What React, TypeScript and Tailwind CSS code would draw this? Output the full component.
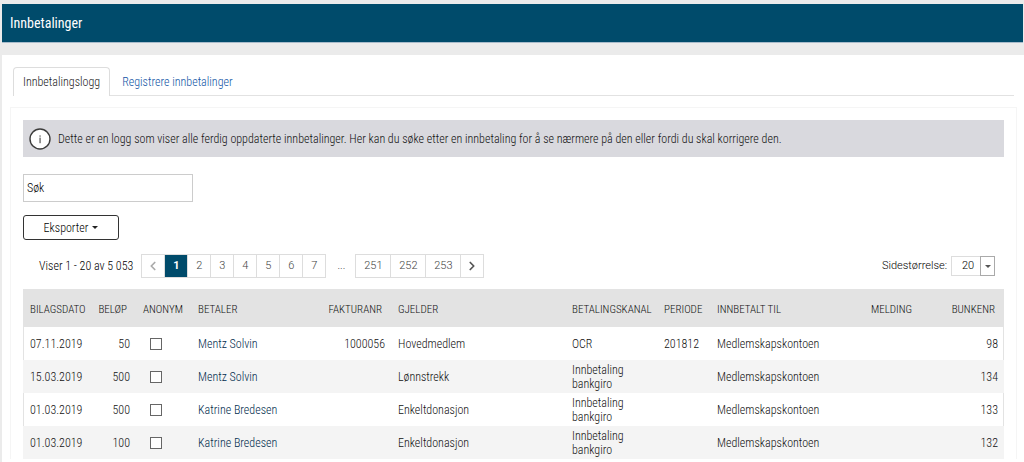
import { ChevronLeft, ChevronRight } from "lucide-react";

type Payment = {
  date: string;
  amount: string;
  payer: string;
  invoice: string;
  concerns: string;
  channel: string;
  period: string;
  account: string;
  batch: string;
};

const payments: Payment[] = [
  { date: "07.11.2019", amount: "50", payer: "Mentz Solvin", invoice: "1000056", concerns: "Hovedmedlem", channel: "OCR", period: "201812", account: "Medlemskapskontoen", batch: "98" },
  { date: "15.03.2019", amount: "500", payer: "Mentz Solvin", invoice: "", concerns: "Lønnstrekk", channel: "Innbetaling bankgiro", period: "", account: "Medlemskapskontoen", batch: "134" },
  { date: "01.03.2019", amount: "500", payer: "Katrine Bredesen", invoice: "", concerns: "Enkeltdonasjon", channel: "Innbetaling bankgiro", period: "", account: "Medlemskapskontoen", batch: "133" },
  { date: "01.03.2019", amount: "100", payer: "Katrine Bredesen", invoice: "", concerns: "Enkeltdonasjon", channel: "Innbetaling bankgiro", period: "", account: "Medlemskapskontoen", batch: "132" },
];

const columns = [
  { title: "Bilagsdato", width: "w-[70px]", align: "pl-[7px] text-left" },
  { title: "Beløp", width: "w-[43px]", align: "pr-[9px] text-right" },
  { title: "Anonym", width: "w-[55px]", align: "pl-[7px] text-left" },
  { title: "Betaler", width: "w-[131px]", align: "pl-[7px] text-left" },
  { title: "Fakturanr", width: "w-[69px]", align: "pr-[9px] text-right" },
  { title: "Gjelder", width: "", align: "pl-[7px] text-left" },
  { title: "Betalingskanal", width: "w-[92px]", align: "pl-[7px] text-left" },
  { title: "Periode", width: "w-[53px]", align: "pl-[7px] text-left" },
  { title: "Innbetalt til", width: "w-[154px]", align: "pl-[7px] text-left" },
  { title: "Melding", width: "w-[66px]", align: "pl-[7px] text-left" },
  { title: "Bunkenr", width: "w-[74px]", align: "pr-[9px] text-right" },
];

const firstPages = ["1", "2", "3", "4", "5", "6", "7"];
const lastPages = ["251", "252", "253"];

function Tabs() {
  return (
    <nav className="mr-2.5 ml-[11px] flex border-b border-[#e2e2e2]">
      <a
        href="#logg"
        className="-mb-px flex h-[29px] items-center rounded-t border border-b-0 border-[#dddddd] bg-white px-[9px] text-[#222222]"
      >
        Innbetalingslogg
      </a>
      <a href="#registrere" className="-mb-px flex h-[29px] items-center px-3 text-[#0f55a5]">
        Registrere innbetalinger
      </a>
    </nav>
  );
}

function InfoBox() {
  return (
    <div className="flex h-[37px] items-center gap-[7px] bg-[#d9d9de] px-1.5 text-[#111111]">
      <svg viewBox="0 0 22 22" className="size-[22px] shrink-0" aria-hidden="true">
        <circle cx="11" cy="11" r="10" fill="#ffffff" stroke="#3c3c3c" strokeWidth="1.4" />
        <rect x="10.5" y="7.4" width="1.1" height="1.3" fill="#444444" />
        <rect x="10.5" y="9.6" width="1.1" height="5.6" fill="#444444" />
      </svg>
      <p>
        Dette er en logg som viser alle ferdig oppdaterte innbetalinger. Her kan du søke etter en
        innbetaling for å se nærmere på den eller fordi du skal korrigere den.
      </p>
    </div>
  );
}

function Pager() {
  return (
    <div className="mt-3.5 flex items-center">
      <p className="ml-4 text-black">Viser 1 - 20 av 5 053</p>
      <div className="ml-2 flex font-[Roboto,sans-serif] text-[11px] text-[#444444]">
        <button aria-label="Forrige side" className="flex h-6 w-6 items-center justify-center border border-[#dddddd]">
          <ChevronLeft className="size-3.5 text-[#aaaaaa]" strokeWidth={3} />
        </button>
        {firstPages.map((page) => (
          <button
            key={page}
            className={
              page === "1"
                ? "-ml-px h-6 w-6 border border-[#dddddd] bg-[#004b6b] font-bold text-white"
                : "-ml-px h-6 w-6 border border-[#dddddd]"
            }
          >
            {page}
          </button>
        ))}
        <span className="flex w-[30px] items-center justify-center">...</span>
        {lastPages.map((page) => (
          <button key={page} className="-ml-px h-6 w-9 border border-[#dddddd]">
            {page}
          </button>
        ))}
        <button aria-label="Neste side" className="-ml-px flex h-6 w-6 items-center justify-center border border-[#dddddd]">
          <ChevronRight className="size-3.5 text-[#555555]" strokeWidth={3} />
        </button>
      </div>
      <div className="mr-[9px] ml-auto flex items-center gap-1 font-[Roboto,sans-serif] text-[11px] text-black">
        <label htmlFor="pageSize">Sidestørrelse:</label>
        <div className="relative">
          <select
            id="pageSize"
            defaultValue="20"
            className="block h-5 w-11 appearance-none border border-[#dddddd] bg-white pl-2.5 text-black"
          >
            <option>20</option>
            <option>50</option>
            <option>100</option>
          </select>
          <span className="pointer-events-none absolute inset-y-0 right-0 flex w-[15px] items-center justify-center border border-[#aaaaaa]">
            <svg viewBox="0 0 6 3" className="h-[3px] w-1.5" aria-hidden="true">
              <path d="M0 0h6L3 3z" fill="#555555" />
            </svg>
          </span>
        </div>
      </div>
    </div>
  );
}

function PaymentTable() {
  return (
    <table className="mt-[11px] w-full table-fixed text-[#111111] shadow-[inset_1px_0_#e3e3e3,inset_-1px_0_#e3e3e3]">
      <thead className="bg-[#e3e3e3]">
        <tr className="h-[38px]">
          {columns.map((column) => (
            <th
              key={column.title}
              className={`${column.width} ${column.align} pt-[3px] text-[11px] font-light whitespace-nowrap uppercase`}
            >
              {column.title}
            </th>
          ))}
        </tr>
      </thead>
      <tbody>
        {payments.map((payment) => (
          <tr key={payment.batch} className="h-[33px] even:bg-[#f4f4f4]">
            <td className="pl-[7px]">{payment.date}</td>
            <td className="pr-1.5 text-right">{payment.amount}</td>
            <td className="pl-3.5">
              <input
                type="checkbox"
                aria-label="Anonym"
                className="block size-3 appearance-none border border-[#666666] bg-white"
              />
            </td>
            <td className="pl-[7px]">
              <a href="#betaler" className="text-[#002b4d]">
                {payment.payer}
              </a>
            </td>
            <td className="pr-1.5 text-right">{payment.invoice}</td>
            <td className="pl-[7px]">{payment.concerns}</td>
            <td className="pr-5 pl-[7px] leading-[14px]">{payment.channel}</td>
            <td className="pl-[7px]">{payment.period}</td>
            <td className="pl-[7px]">{payment.account}</td>
            <td></td>
            <td className="pr-1.5 text-right">{payment.batch}</td>
          </tr>
        ))}
      </tbody>
    </table>
  );
}

export default function App() {
  return (
    <div className="flex min-h-screen flex-col bg-[#ebebeb] pt-1 pl-0.5 font-['Roboto_Condensed',Roboto,sans-serif] text-xs leading-4 font-light">
      <header className="mr-px flex h-[39px] items-center border-b border-[#a9bccb] bg-[#004b6b] px-2">
        <h1 className="text-sm font-normal text-white">Innbetalinger</h1>
      </header>
      <main className="mt-3 grow bg-white pt-3">
        <Tabs />
        <section className="mt-[11px] mr-[7px] ml-2 border border-b-0 border-[#f5f5f5] px-3 pt-3">
          <InfoBox />
          <input
            type="text"
            aria-label="Søk"
            placeholder="Søk"
            className="mt-[17px] block h-7 w-[170px] border border-[#cccccc] px-[3px] text-black placeholder:text-black"
          />
          <button className="mt-[13px] flex h-[25px] w-24 items-center justify-center gap-1 rounded-[3px] border border-[#333333] text-black">
            Eksporter
            <svg viewBox="0 0 6 3" className="h-[3px] w-1.5" aria-hidden="true">
              <path d="M0 0h6L3 3z" fill="#222222" />
            </svg>
          </button>
          <Pager />
          <PaymentTable />
        </section>
      </main>
    </div>
  );
}
